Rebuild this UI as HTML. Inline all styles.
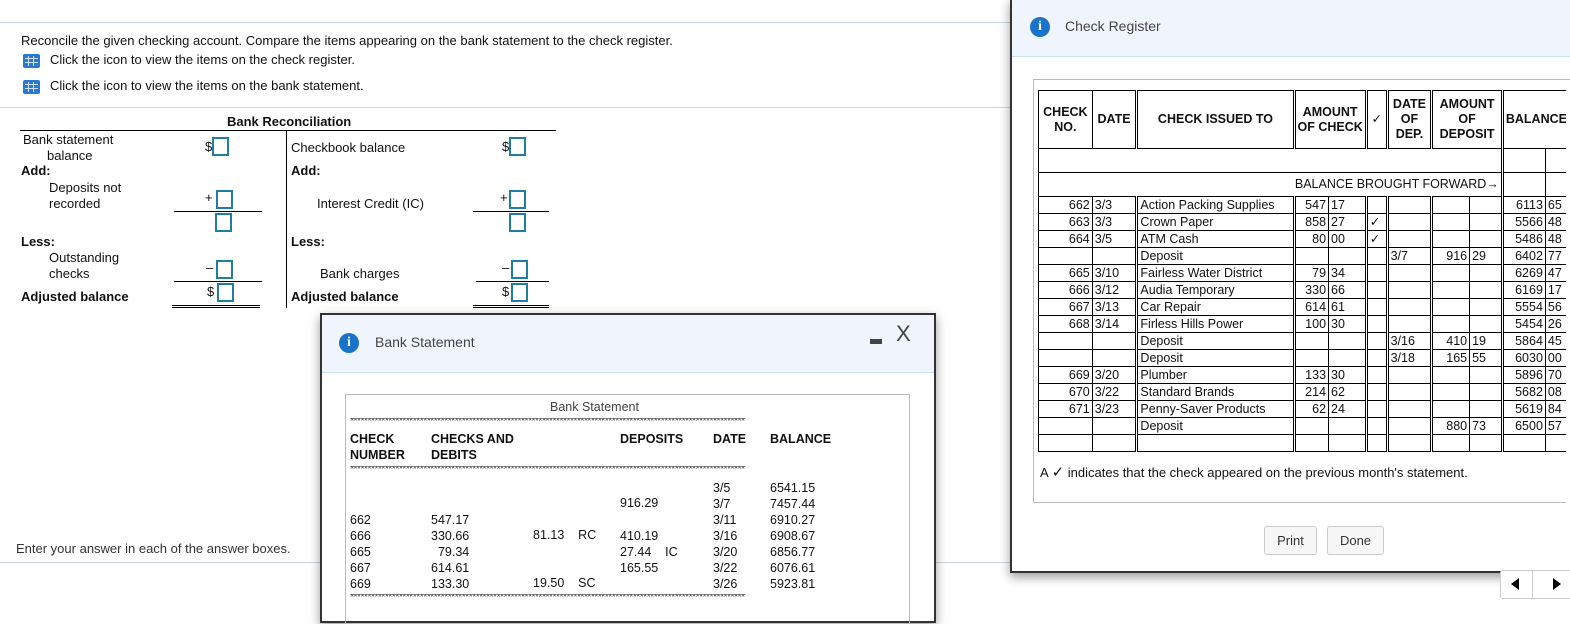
<!DOCTYPE html>
<html><head><meta charset="utf-8">
<style>
*{margin:0;padding:0;box-sizing:border-box}
body{width:1570px;height:615px;overflow:hidden;background:#fff;font-family:"Liberation Sans",Arial,sans-serif;color:#111;position:relative}
.a{position:absolute;white-space:nowrap}
.t12{font-size:13px}
.b{font-weight:bold}
.box{position:absolute;width:17px;height:19px;border:2px solid #1f7fa0;background:#fff}
.hl{position:absolute;height:1px;background:#000}
.grid{position:absolute;width:17px;height:14px;background:#2a78d0;border-radius:2px}
.grid:after{content:"";position:absolute;left:2px;top:2px;right:2px;bottom:2px;background:
linear-gradient(90deg,transparent 3px,#cfe0f7 3px,#cfe0f7 4px,transparent 4px,transparent 8px,#cfe0f7 8px,#cfe0f7 9px,transparent 9px),
linear-gradient(0deg,transparent 3px,#cfe0f7 3px,#cfe0f7 4px,transparent 4px,transparent 7px,#cfe0f7 7px,#cfe0f7 8px,transparent 8px)}
.info{position:absolute;width:20px;height:20px;border-radius:50%;background:#1a73c9;color:#fff;font:bold 14px "Liberation Serif",serif;text-align:center;line-height:20px}
table.reg{position:absolute;left:1038px;top:90px;border-collapse:collapse;table-layout:fixed;font-size:12.5px}
table.reg td{border:1px solid #000;height:17px;padding:0 2px;line-height:15px;white-space:nowrap;overflow:hidden}
table.reg td.d{border-right:3px double #000}
table.reg tr.h td{height:58px;font-weight:bold;text-align:center;line-height:15px}
.r{text-align:right}
.bs{position:absolute;font-size:12.5px}
.stars{position:absolute;left:350px;font-size:10px;letter-spacing:-0.4px;color:#333;overflow:hidden;width:395px;line-height:8px;height:6px;white-space:nowrap}
</style></head><body>

<div class="hl" style="left:0;top:22px;width:1012px;background:#cdd3dd"></div>
<div class="a t12" style="left:21px;top:33px">Reconcile the given checking account. Compare the items appearing on the bank statement to the check register.</div>
<div class="grid" style="left:23px;top:54px"></div>
<div class="a t12" style="left:50px;top:52px">Click the icon to view the items on the check register.</div>
<div class="grid" style="left:23px;top:80px"></div>
<div class="a t12" style="left:50px;top:78px">Click the icon to view the items on the bank statement.</div>
<div class="hl" style="left:0;top:107px;width:1012px;background:#cdd3dd"></div>

<div class="a t12 b" style="left:227px;top:114px">Bank Reconciliation</div>
<div class="hl" style="left:20px;top:130px;width:536px"></div>
<div style="position:absolute;left:286px;top:130px;width:1px;height:178px;background:#000"></div>
<div class="a t12" style="left:23px;top:132px">Bank statement</div>
<div class="a t12" style="left:47px;top:148px">balance</div>
<div class="a t12" style="left:205px;top:139px">$</div>
<div class="box" style="left:212px;top:137px"></div>
<div class="a t12 b" style="left:21px;top:163px">Add:</div>
<div class="a t12" style="left:49px;top:180px">Deposits not</div>
<div class="a t12" style="left:49px;top:196px">recorded</div>
<div class="a t12" style="left:205px;top:190px">+</div>
<div class="box" style="left:216px;top:190px"></div>
<div class="hl" style="left:174px;top:211px;width:88px"></div>
<div class="box" style="left:215px;top:213px"></div>
<div class="a t12 b" style="left:21px;top:234px">Less:</div>
<div class="a t12" style="left:49px;top:250px">Outstanding</div>
<div class="a t12" style="left:49px;top:266px">checks</div>
<div class="a t12" style="left:206px;top:260px">–</div>
<div class="box" style="left:216px;top:260px"></div>
<div class="hl" style="left:174px;top:281px;width:88px"></div>
<div class="a t12" style="left:207px;top:284px">$</div>
<div class="box" style="left:217px;top:283px"></div>
<div class="a t12 b" style="left:21px;top:289px">Adjusted balance</div>
<div class="hl" style="left:172px;top:305px;width:88px"></div>
<div class="hl" style="left:172px;top:307px;width:88px"></div>

<div class="a t12" style="left:291px;top:140px">Checkbook balance</div>
<div class="a t12" style="left:502px;top:139px">$</div>
<div class="box" style="left:509px;top:137px"></div>
<div class="a t12 b" style="left:291px;top:163px">Add:</div>
<div class="a t12" style="left:317px;top:196px">Interest Credit (IC)</div>
<div class="a t12" style="left:500px;top:190px">+</div>
<div class="box" style="left:509px;top:190px"></div>
<div class="hl" style="left:473px;top:211px;width:76px"></div>
<div class="box" style="left:509px;top:213px"></div>
<div class="a t12 b" style="left:291px;top:234px">Less:</div>
<div class="a t12" style="left:320px;top:266px">Bank charges</div>
<div class="a t12" style="left:502px;top:260px">–</div>
<div class="box" style="left:511px;top:260px"></div>
<div class="hl" style="left:476px;top:281px;width:73px"></div>
<div class="a t12" style="left:502px;top:284px">$</div>
<div class="box" style="left:511px;top:283px"></div>
<div class="a t12 b" style="left:291px;top:289px">Adjusted balance</div>
<div class="hl" style="left:473px;top:305px;width:76px"></div>
<div class="hl" style="left:473px;top:307px;width:76px"></div>

<div class="a t12" style="left:16px;top:541px;color:#333">Enter your answer in each of the answer boxes.</div>
<div class="hl" style="left:0;top:562px;width:1012px;background:#cdd3dd"></div>

<!-- Bank statement dialog -->
<div style="position:absolute;left:320px;top:313px;width:616px;height:310px;border:2px solid #333;background:#fff;box-shadow:0 4px 10px rgba(0,0,0,.4)">
  <div style="height:58px;background:#f0f5fd;border-bottom:1px solid #c5e0f5"></div>
</div>
<div class="info" style="left:339px;top:333px">i</div>
<div class="a" style="left:375px;top:334px;font-size:14px;color:#444">Bank Statement</div>
<div style="position:absolute;left:870px;top:339px;width:12px;height:5px;background:#444"></div>
<div class="a" style="left:896px;top:321px;font-size:22px;color:#444">X</div>
<div style="position:absolute;left:345px;top:394px;width:565px;height:230px;border:1px solid #bbb"></div>
<div class="a" style="left:550px;top:400px;font-size:12.5px;color:#444">Bank Statement</div>
<div class="stars" style="top:418px">************************************************************************************************************************************</div>
<div class="bs b" style="left:350px;top:432px">CHECK</div>
<div class="bs b" style="left:350px;top:448px">NUMBER</div>
<div class="bs b" style="left:431px;top:432px">CHECKS AND</div>
<div class="bs b" style="left:431px;top:448px">DEBITS</div>
<div class="bs b" style="left:620px;top:432px">DEPOSITS</div>
<div class="bs b" style="left:713px;top:432px">DATE</div>
<div class="bs b" style="left:770px;top:432px">BALANCE</div>
<div class="stars" style="top:466px">************************************************************************************************************************************</div>
<div class="bs" style="left:713px;top:480px;line-height:16px">3/5<br>3/7<br>3/11<br>3/16<br>3/20<br>3/22<br>3/26</div>
<div class="bs" style="left:770px;top:480px;line-height:16px">6541.15<br>7457.44<br>6910.27<br>6908.67<br>6856.77<br>6076.61<br>5923.81</div>
<div class="bs" style="left:350px;top:512px;line-height:16px">662<br>666<br>665<br>667<br>669</div>
<div class="bs" style="left:431px;top:512px;line-height:16px">547.17<br>330.66<br>&nbsp;&nbsp;79.34<br>614.61<br>133.30</div>
<div class="bs" style="left:620px;top:496px">916.29</div>
<div class="bs" style="left:533px;top:528px">81.13&nbsp;&nbsp;&nbsp;&nbsp;RC</div>
<div class="bs" style="left:620px;top:528px;line-height:16px">410.19<br>27.44&nbsp;&nbsp;&nbsp;&nbsp;IC<br>165.55</div>
<div class="bs" style="left:533px;top:576px">19.50&nbsp;&nbsp;&nbsp;&nbsp;SC</div>
<div class="stars" style="top:594px">************************************************************************************************************************************</div>

<!-- Check register dialog -->
<div style="position:absolute;left:1010px;top:-2px;width:580px;height:575px;border:2px solid #333;background:#fff;box-shadow:0 4px 10px rgba(0,0,0,.4)">
  <div style="height:57px;background:#f0f5fd;border-bottom:1px solid #c5e0f5"></div>
</div>
<div class="info" style="left:1030px;top:17px">i</div>
<div class="a" style="left:1065px;top:18px;font-size:14px;color:#444">Check Register</div>
<div style="position:absolute;left:1033px;top:79px;width:545px;height:424px;border:1px solid #bbb"></div>

<table class="reg">
<colgroup><col style="width:54px"><col style="width:45px"><col style="width:158px"><col style="width:32px"><col style="width:35px"><col style="width:21px"><col style="width:45px"><col style="width:38px"><col style="width:33px"><col style="width:43px"><col style="width:24px"></colgroup>
<tr class="h"><td>CHECK<br>NO.</td><td class="d">DATE</td><td class="d">CHECK ISSUED TO</td><td colspan="2" class="d">AMOUNT<br>OF CHECK</td><td class="d" style="font-weight:normal">✓</td><td class="d">DATE<br>OF<br>DEP.</td><td colspan="2" class="d">AMOUNT<br>OF<br>DEPOSIT</td><td colspan="2">BALANCE</td></tr>
<tr><td colspan="9" class="d" style="height:24px;border-bottom:1px solid #000"></td><td style="height:24px"></td><td></td></tr>
<tr><td colspan="9" class="d r" style="height:24px">BALANCE BROUGHT FORWARD→</td><td></td><td></td></tr>
<tr><td class="r">662</td><td class="d">3/3</td><td class="d">Action Packing Supplies</td><td class="r">547</td><td class="d">17</td><td class="d"></td><td class="d"></td><td></td><td class="d"></td><td class="r">6113</td><td>65</td></tr>
<tr><td class="r">663</td><td class="d">3/3</td><td class="d">Crown Paper</td><td class="r">858</td><td class="d">27</td><td class="d">✓</td><td class="d"></td><td></td><td class="d"></td><td class="r">5566</td><td>48</td></tr>
<tr><td class="r">664</td><td class="d">3/5</td><td class="d">ATM Cash</td><td class="r">80</td><td class="d">00</td><td class="d">✓</td><td class="d"></td><td></td><td class="d"></td><td class="r">5486</td><td>48</td></tr>
<tr><td></td><td class="d"></td><td class="d">Deposit</td><td></td><td class="d"></td><td class="d"></td><td class="d">3/7</td><td class="r">916</td><td class="d">29</td><td class="r">6402</td><td>77</td></tr>
<tr><td class="r">665</td><td class="d">3/10</td><td class="d">Fairless Water District</td><td class="r">79</td><td class="d">34</td><td class="d"></td><td class="d"></td><td></td><td class="d"></td><td class="r">6269</td><td>47</td></tr>
<tr><td class="r">666</td><td class="d">3/12</td><td class="d">Audia Temporary</td><td class="r">330</td><td class="d">66</td><td class="d"></td><td class="d"></td><td></td><td class="d"></td><td class="r">6169</td><td>17</td></tr>
<tr><td class="r">667</td><td class="d">3/13</td><td class="d">Car Repair</td><td class="r">614</td><td class="d">61</td><td class="d"></td><td class="d"></td><td></td><td class="d"></td><td class="r">5554</td><td>56</td></tr>
<tr><td class="r">668</td><td class="d">3/14</td><td class="d">Firless Hills Power</td><td class="r">100</td><td class="d">30</td><td class="d"></td><td class="d"></td><td></td><td class="d"></td><td class="r">5454</td><td>26</td></tr>
<tr><td></td><td class="d"></td><td class="d">Deposit</td><td></td><td class="d"></td><td class="d"></td><td class="d">3/16</td><td class="r">410</td><td class="d">19</td><td class="r">5864</td><td>45</td></tr>
<tr><td></td><td class="d"></td><td class="d">Deposit</td><td></td><td class="d"></td><td class="d"></td><td class="d">3/18</td><td class="r">165</td><td class="d">55</td><td class="r">6030</td><td>00</td></tr>
<tr><td class="r">669</td><td class="d">3/20</td><td class="d">Plumber</td><td class="r">133</td><td class="d">30</td><td class="d"></td><td class="d"></td><td></td><td class="d"></td><td class="r">5896</td><td>70</td></tr>
<tr><td class="r">670</td><td class="d">3/22</td><td class="d">Standard Brands</td><td class="r">214</td><td class="d">62</td><td class="d"></td><td class="d"></td><td></td><td class="d"></td><td class="r">5682</td><td>08</td></tr>
<tr><td class="r">671</td><td class="d">3/23</td><td class="d">Penny-Saver Products</td><td class="r">62</td><td class="d">24</td><td class="d"></td><td class="d"></td><td></td><td class="d"></td><td class="r">5619</td><td>84</td></tr>
<tr><td></td><td class="d"></td><td class="d">Deposit</td><td></td><td class="d"></td><td class="d"></td><td class="d"></td><td class="r">880</td><td class="d">73</td><td class="r">6500</td><td>57</td></tr>
<tr><td style="height:14px"></td><td class="d"></td><td class="d"></td><td></td><td class="d"></td><td class="d"></td><td class="d"></td><td></td><td class="d"></td><td></td><td></td></tr>
</table>
<div style="position:absolute;left:1566px;top:80px;width:4px;height:425px;background:#fff"></div>

<div class="a t12" style="left:1040px;top:463px">A <span style="font-size:15px">✓</span> indicates that the check appeared on the previous month's statement.</div>
<div class="a" style="left:1264px;top:526px;width:53px;height:29px;border:1px solid #ccc;border-radius:3px;background:#f7f7f7;font-size:13px;color:#333;text-align:center;line-height:27px">Print</div>
<div class="a" style="left:1327px;top:526px;width:57px;height:29px;border:1px solid #ccc;border-radius:3px;background:#f7f7f7;font-size:13px;color:#333;text-align:center;line-height:27px">Done</div>
<div class="a" style="left:1500px;top:570px;width:72px;height:29px;border:1px solid #ccc;border-radius:3px;background:#fff"></div>
<div style="position:absolute;left:1532px;top:570px;width:1px;height:29px;background:#ccc"></div>
<div style="position:absolute;left:1511px;top:578px;width:0;height:0;border-top:6px solid transparent;border-bottom:6px solid transparent;border-right:8px solid #000"></div>
<div style="position:absolute;left:1553px;top:578px;width:0;height:0;border-top:6px solid transparent;border-bottom:6px solid transparent;border-left:8px solid #000"></div>
</body></html>
